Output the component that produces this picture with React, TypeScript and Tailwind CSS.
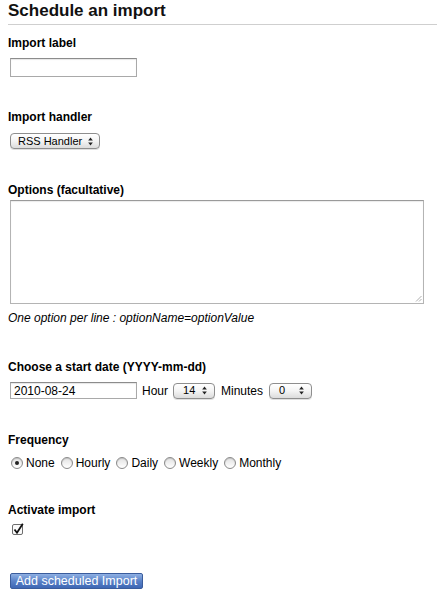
import React from 'react';

function Arrows() {
  return (
    <svg width="5" height="9" viewBox="0 0 5 9" className="shrink-0">
      <path d="M2.5 0.5 L4.8 3.5 L0.2 3.5 Z" fill="#222" />
      <path d="M2.5 8.5 L4.8 5.5 L0.2 5.5 Z" fill="#222" />
    </svg>
  );
}

function FakeSelect({ value, className }: { value: string; className: string }) {
  return (
    <div
      className={`flex h-[16px] items-center justify-between rounded-[4px] border border-[#8e8e8e] bg-gradient-to-b from-white via-[#f4f4f4] to-[#dcdcdc] text-[11px] leading-none text-black shadow-[0_1px_0_rgba(0,0,0,0.12)] ${className}`}
    >
      <span>{value}</span>
      <Arrows />
    </div>
  );
}

function Radio({ label, checked }: { label: string; checked?: boolean }) {
  return (
    <label className="flex items-center gap-[3px] mr-[6px]">
      <span className="flex h-[12px] w-[12px] items-center justify-center rounded-full border border-[#8a8a8a] bg-gradient-to-b from-[#e2e2e2] to-white shadow-[inset_0_1px_1px_rgba(0,0,0,0.15)]">
        {checked && <span className="h-[4px] w-[4px] rounded-full bg-[#222]" />}
      </span>
      <span>{label}</span>
    </label>
  );
}

function Label({ children }: { children: React.ReactNode }) {
  return <div className="text-[12px] font-bold leading-4 text-black">{children}</div>;
}

export default function App() {
  return (
    <div className="min-h-[594px] bg-white pl-[8px] text-[12px] leading-4 text-black" style={{ fontFamily: '"Liberation Sans", Arial, sans-serif' }}>
      <h1 className="pt-[1px] text-[17px] font-bold leading-5 text-[#111]">Schedule an import</h1>
      <div className="mt-[3px] h-px bg-[#cfcfcf]" />

      <div className="mt-[10px]">
        <Label>Import label</Label>
        <input
          type="text"
          className="ml-[2px] mt-[7px] block h-[19px] w-[127px] border border-[#a9a9a9] border-t-[#8c8c8c] bg-white shadow-[inset_0_1px_1px_rgba(0,0,0,0.1)] outline-none"
        />
      </div>

      <div className="mt-[32px]">
        <Label>Import handler</Label>
        <FakeSelect value="RSS Handler" className="ml-[2px] mt-[8px] w-[90px] pl-[7px] pr-[6px]" />
      </div>

      <div className="mt-[33px]">
        <Label>Options (facultative)</Label>
        <div className="relative ml-[2px] mt-[2px] h-[104px] w-[414px] border border-[#b4b4b4] border-t-[#9a9a9a] bg-white shadow-[inset_0_1px_1px_rgba(0,0,0,0.08)]">
          <svg width="7" height="7" viewBox="0 0 7 7" className="absolute bottom-[1px] right-[1px]">
            <path d="M6.5 1 L1 6.5 M6.5 4 L4 6.5" stroke="#9a9a9a" strokeWidth="0.8" />
          </svg>
        </div>
        <div className="mt-[6px] italic">One option per line : optionName=optionValue</div>
      </div>

      <div className="mt-[33px]">
        <Label>Choose a start date (YYYY-mm-dd)</Label>
        <div className="mt-[7px] flex items-center">
          <div className="ml-[2px] flex h-[17px] w-[127px] items-center border border-[#a9a9a9] border-t-[#8c8c8c] bg-white pl-[3px] text-[12px] shadow-[inset_0_1px_1px_rgba(0,0,0,0.1)]">
            2010-08-24
          </div>
          <span className="ml-[5px]">Hour</span>
          <FakeSelect value="14" className="ml-[5px] w-[42px] pl-[9px] pr-[7px]" />
          <span className="ml-[6px]">Minutes</span>
          <FakeSelect value="0" className="ml-[6px] w-[43px] pl-[9px] pr-[7px]" />
        </div>
      </div>

      <div className="mt-[33px]">
        <Label>Frequency</Label>
        <div className="ml-[3px] mt-[7px] flex h-4 items-center">
          <Radio label="None" checked />
          <Radio label="Hourly" />
          <Radio label="Daily" />
          <Radio label="Weekly" />
          <Radio label="Monthly" />
        </div>
      </div>

      <div className="mt-[31px]">
        <Label>Activate import</Label>
        <div className="ml-[4px] mt-[5px] h-[13px] w-[12px]">
          <svg width="12" height="13" viewBox="0 0 12 13">
            <rect x="0.5" y="1.5" width="10" height="10" rx="1.5" fill="#fafafa" stroke="#6e6e6e" />
            <path d="M2.5 6.5 L5 9.8 L10.8 0.8" fill="none" stroke="#111" strokeWidth="1.8" />
          </svg>
        </div>
      </div>

      <button
        type="button"
        className="ml-[2px] mt-[37px] flex h-[16px] w-[133px] items-center justify-center rounded-[2px] border border-[#3a5c9c] bg-gradient-to-b from-[#8fb0e3] via-[#5a82c8] to-[#3e67b4] text-[12.5px] leading-none text-white"
      >
        Add scheduled Import
      </button>
    </div>
  );
}
